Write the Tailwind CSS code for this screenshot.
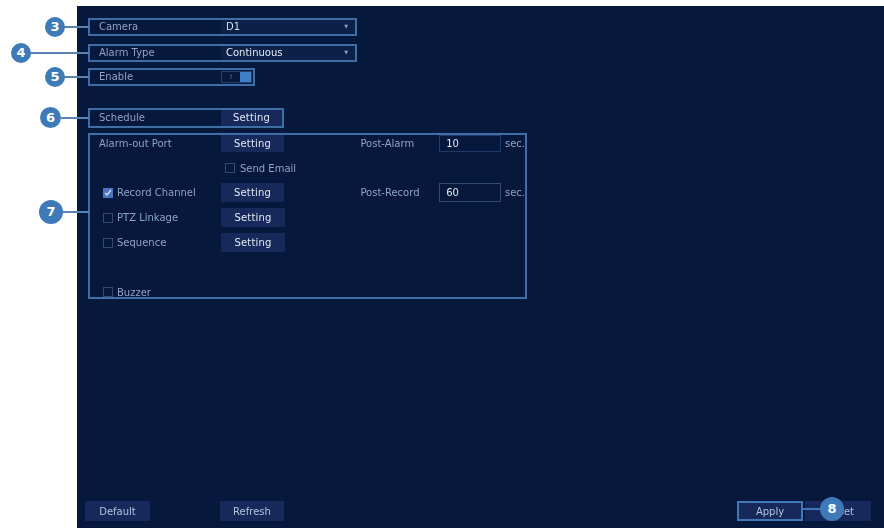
<!DOCTYPE html>
<html>
<head>
<meta charset="utf-8">
<script src="https://cdn.jsdelivr.net/npm/@tailwindcss/browser@4"></script>
</head>
<body class="bg-white">
<div class="relative w-[884px] h-[528px] overflow-hidden bg-white font-['DejaVu_Sans',sans-serif] text-[10px] text-[#8fa3c4]">
  <main class="absolute left-[77px] top-[6px] w-[807px] h-[522px] bg-[#06183b] flex flex-col pl-[11px] pt-[12px] blur-[0.6px]">
    <div class="flex items-center w-[269px] h-[18px] border-2 border-[#3f6ea6] pl-[9px]">
      <span class="w-[122px] -translate-y-px">Camera</span>
      <span class="flex-1 flex justify-between items-center pl-[5px] pr-[7px] h-full bg-[#0c2148] text-[#d5deec]"><span class="-translate-y-px">D1</span><span class="text-[5px] text-[#8fa3c4]">▼</span></span>
    </div>
    <div class="flex items-center w-[269px] h-[18px] mt-[8px] border-2 border-[#3f6ea6] pl-[9px]">
      <span class="w-[122px] -translate-y-px">Alarm Type</span>
      <span class="flex-1 flex justify-between items-center pl-[5px] pr-[7px] h-full bg-[#0c2148] text-[#e2e8f2]"><span class="-translate-y-px">Continuous</span><span class="text-[5px] text-[#8fa3c4]">▼</span></span>
    </div>
    <div class="flex items-center w-[167px] h-[18px] mt-[6px] border-2 border-[#3f6ea6] pl-[9px]">
      <span class="w-[122px] -translate-y-px">Enable</span>
      <span class="flex h-[12px] w-[31px] border border-[#24406e]"><span class="w-[18px] text-center text-[7px] leading-[10px] text-[#5f7396]">I</span><span class="flex-1 bg-[#3f7fc4]"></span></span>
    </div>
    <div class="flex items-center w-[196px] h-[20px] mt-[22px] border-2 border-[#3f6ea6] pl-[9px]">
      <span class="w-[122px] -translate-y-px">Schedule</span>
      <span class="flex-1 h-full flex items-center justify-center bg-[#16295a] text-[#e2e8f2] tracking-[0.2px]"><span class="-translate-y-px">Setting</span></span>
    </div>
    <section class="relative w-[439px] h-[166px] mt-[5px] border-2 border-[#3f6ea6] flex flex-col">
      <div class="flex items-center h-[17px] pl-[9px]">
        <span class="w-[122px]">Alarm-out Port</span>
        <span class="w-[64px] h-full flex items-center justify-center bg-[#16295a] text-[#e2e8f2] tracking-[0.2px]">Setting</span>
        <span class="ml-[76px] w-[79px]">Post-Alarm</span>
        <span class="w-[62px] h-[17px] border border-[#1f3a68] flex items-center pl-[6px] text-[#e2e8f2]">10</span>
        <span class="ml-[4px]">sec.</span>
      </div>
      <div class="flex items-center h-[16px] mt-[8px] pl-[135px]">
        <span class="w-[10px] h-[10px] border border-[#33496f] mr-[5px]"></span><span>Send Email</span>
      </div>
      <div class="flex items-center h-[19px] mt-[7px] pl-[13px]">
        <span class="w-[10px] h-[10px] bg-[#4a73bd] mr-[4px] flex items-center justify-center">
          <svg width="8" height="8" viewBox="0 0 8 8" fill="none" stroke="#d5deec" stroke-width="1.3"><path d="M1 4l2 2 4-5"/></svg>
        </span>
        <span class="w-[104px]">Record Channel</span>
        <span class="w-[64px] h-full flex items-center justify-center bg-[#16295a] text-[#e2e8f2] tracking-[0.2px]">Setting</span>
        <span class="ml-[76px] w-[79px]">Post-Record</span>
        <span class="w-[62px] h-[19px] border border-[#33496f] flex items-center pl-[6px] text-[#e2e8f2]">60</span>
        <span class="ml-[4px]">sec.</span>
      </div>
      <div class="flex items-center h-[19px] mt-[6px] pl-[13px]">
        <span class="w-[10px] h-[10px] border border-[#33496f] mr-[4px]"></span>
        <span class="w-[104px]">PTZ Linkage</span>
        <span class="w-[64px] h-full flex items-center justify-center bg-[#16295a] text-[#e2e8f2] tracking-[0.2px]">Setting</span>
      </div>
      <div class="flex items-center h-[19px] mt-[6px] pl-[13px]">
        <span class="w-[10px] h-[10px] border border-[#33496f] mr-[4px]"></span>
        <span class="w-[104px]">Sequence</span>
        <span class="w-[64px] h-full flex items-center justify-center bg-[#16295a] text-[#e2e8f2] tracking-[0.2px]">Setting</span>
      </div>
      <div class="flex items-center mt-auto h-[10px] pl-[13px]">
        <span class="w-[10px] h-[10px] border border-[#33496f] mr-[4px]"></span>
        <span>Buzzer</span>
      </div>
    </section>
    <div class="flex items-center mt-[202px] -ml-[3px]">
      <span class="w-[65px] h-[20px] flex items-center justify-center bg-[#16295a] text-[#b4c2da]">Default</span>
      <span class="ml-[70px] w-[64px] h-[20px] flex items-center justify-center bg-[#16295a] text-[#b4c2da]">Refresh</span>
      <span class="ml-[453px] w-[66px] h-[20px] flex items-center justify-center bg-[#16295a] border-2 border-[#3f78b8] text-[#b4c2da]">Apply</span>
      <span class="ml-[2px] w-[66px] h-[20px] flex items-center justify-end pr-[17px] bg-[#16295a] text-[#b4c2da]">Reset</span>
    </div>
  </main>

  <!-- callouts -->
  <div class="absolute left-[61px] top-[26px] w-[28px] h-[2px] bg-[#5a83b3]"></div>
  <div class="absolute left-[30px] top-[52px] w-[59px] h-[2px] bg-[#5a83b3]"></div>
  <div class="absolute left-[61px] top-[76px] w-[28px] h-[2px] bg-[#5a83b3]"></div>
  <div class="absolute left-[61px] top-[117px] w-[28px] h-[2px] bg-[#5a83b3]"></div>
  <div class="absolute left-[61px] top-[211px] w-[28px] h-[2px] bg-[#5a83b3]"></div>
  <div class="absolute left-[802px] top-[508px] w-[26px] h-[2px] bg-[#3f78b8]"></div>
  <div class="absolute left-[45px] top-[17px] w-[20px] h-[20px] rounded-full bg-[#3f7ab8] text-white font-bold text-[13px] flex items-center justify-center">3</div>
  <div class="absolute left-[11px] top-[43px] w-[20px] h-[20px] rounded-full bg-[#3f7ab8] text-white font-bold text-[13px] flex items-center justify-center">4</div>
  <div class="absolute left-[45px] top-[67px] w-[20px] h-[20px] rounded-full bg-[#3f7ab8] text-white font-bold text-[13px] flex items-center justify-center">5</div>
  <div class="absolute left-[40px] top-[107px] w-[21px] h-[21px] rounded-full bg-[#3f7ab8] text-white font-bold text-[13px] flex items-center justify-center">6</div>
  <div class="absolute left-[39px] top-[200px] w-[24px] h-[24px] rounded-full bg-[#3f7ab8] text-white font-bold text-[13px] flex items-center justify-center">7</div>
  <div class="absolute left-[820px] top-[497px] w-[24px] h-[24px] rounded-full bg-[#3f7ab8] text-white font-bold text-[13px] flex items-center justify-center">8</div>
</div>
</body>
</html>
